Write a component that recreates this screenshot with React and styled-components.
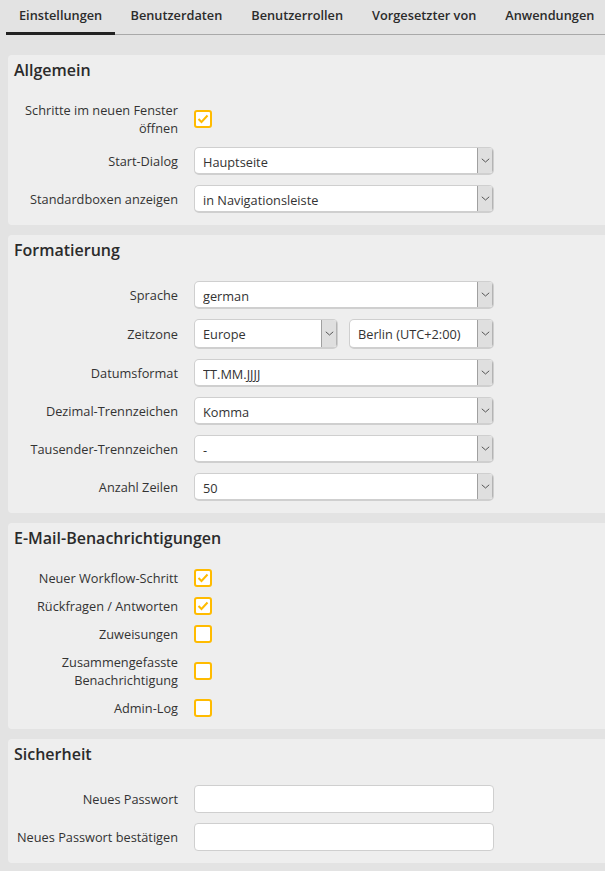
import React from "react";
import styled, { createGlobalStyle } from "styled-components";

const GlobalStyle = createGlobalStyle`
  html, body {
    margin: 0;
    padding: 0;
    background: #e3e3e3;
    overflow: hidden;
  }
  body {
    font-family: "Open Sans", "DejaVu Sans", sans-serif;
    font-size: 12.75px;
    color: #333;
  }
`;

const Page = styled.div`
  width: 605px;
  height: 871px;
  overflow: hidden;
`;

const Tabs = styled.div`
  display: flex;
  height: 35px;
  margin-left: 6px;
  margin-bottom: 20px;
  border-bottom: 1px solid #a9a9a9;
  box-sizing: border-box;
`;

const Tab = styled.div`
  flex: none;
  height: 35px;
  box-sizing: border-box;
  width: ${(p) => (p.$active ? "109px" : "auto")};
  padding: 6px ${(p) => (p.$active ? "13px" : "14.5px")} 0;
  margin-right: ${(p) => (p.$active ? "1px" : "0")};
  font-size: 12.75px;
  line-height: 18px;
  font-weight: 600;
  white-space: nowrap;
  color: #2b2b2b;
  border-bottom: ${(p) => (p.$active ? "3px solid #222" : "none")};
`;

const Card = styled.section`
  margin: 0 0 10px 8px;
  padding: 5px 6px 12px;
  background: #eeeeee;
  border-radius: 4px 0 0 4px;
  display: flex;
  flex-direction: column;
  gap: 10px;
`;

const Title = styled.h2`
  margin: 0;
  height: 31px;
  font-size: 16px;
  line-height: 20px;
  font-weight: 600;
  color: #2b2b2b;
`;

const Row = styled.div`
  display: flex;
  align-items: center;
  gap: 16px;
`;

const Label = styled.label`
  flex: none;
  width: 164px;
  text-align: right;
  font-size: 12.75px;
  line-height: 18px;
  color: #333;
`;

const Controls = styled.div`
  display: grid;
  grid-template-columns: 144px 145px;
  gap: 11px;
`;

const SelectBox = styled.div`
  width: ${(p) => (p.$half ? "auto" : "300px")};
  height: ${(p) => (p.$half ? "30px" : "28px")};
  box-sizing: border-box;
  display: flex;
  background: #fff;
  border: 1px solid #cfcfcf;
  border-bottom-width: 2px;
  border-radius: 5px;
  overflow: hidden;
`;

const NativeSelect = styled.select`
  flex: 1;
  min-width: 0;
  appearance: none;
  border: none;
  outline: none;
  background: transparent;
  padding: ${(p) => (p.$half ? "0" : "2px")} 0 0 8px;
  font: inherit;
  font-size: 12.75px;
  color: #333;
`;

const Arrow = styled.span`
  flex: none;
  width: 16px;
  box-sizing: border-box;
  display: flex;
  align-items: center;
  justify-content: center;
  background: #dfdfdf;
  border-left: 1px solid #a0a0a0;
  border-right: 1px solid #b4b4b4;
  svg {
    display: block;
  }
`;

const TextInput = styled.input`
  width: 300px;
  height: 28px;
  box-sizing: border-box;
  background: #fff;
  border: 1px solid #cfcfcf;
  border-radius: 4px;
  outline: none;
`;

const CheckBox = styled.span`
  flex: none;
  width: 18px;
  height: 18px;
  box-sizing: border-box;
  display: flex;
  align-items: center;
  justify-content: center;
  background: #fff;
  border: 2px solid #ffbb00;
  border-radius: 3px;
`;

const Chevron = () => (
  <svg width="9" height="5" viewBox="0 0 9 5" fill="none">
    <path d="M0.8 0.8 L4.5 4 L8.2 0.8" stroke="#555" strokeWidth="1" />
  </svg>
);

const Tick = () => (
  <svg width="12" height="10" viewBox="0 0 12 10" fill="none">
    <path d="M1.5 5 L4.5 8 L10.5 1.5" stroke="#ffbb00" strokeWidth="2" />
  </svg>
);

const Select = ({ value, half }) => (
  <SelectBox $half={half}>
    <NativeSelect defaultValue={value} $half={half}>
      <option>{value}</option>
    </NativeSelect>
    <Arrow>
      <Chevron />
    </Arrow>
  </SelectBox>
);

const SelectRow = ({ label, value }) => (
  <Row>
    <Label>{label}</Label>
    <Select value={value} />
  </Row>
);

const CheckRow = ({ label, checked }) => (
  <Row>
    <Label>{label}</Label>
    <CheckBox>{checked && <Tick />}</CheckBox>
  </Row>
);

const PasswordRow = ({ label }) => (
  <Row>
    <Label>{label}</Label>
    <TextInput type="password" />
  </Row>
);

const tabs = ["Einstellungen", "Benutzerdaten", "Benutzerrollen", "Vorgesetzter von", "Anwendungen"];

const App = () => (
  <Page>
    <GlobalStyle />
    <Tabs>
      {tabs.map((t, i) => (
        <Tab key={t} $active={i === 0}>
          {t}
        </Tab>
      ))}
    </Tabs>

    <Card>
      <Title>Allgemein</Title>
      <CheckRow label="Schritte im neuen Fenster öffnen" checked />
      <SelectRow label="Start-Dialog" value="Hauptseite" />
      <SelectRow label="Standardboxen anzeigen" value="in Navigationsleiste" />
    </Card>

    <Card>
      <Title>Formatierung</Title>
      <SelectRow label="Sprache" value="german" />
      <Row>
        <Label>Zeitzone</Label>
        <Controls>
          <Select value="Europe" half />
          <Select value="Berlin (UTC+2:00)" half />
        </Controls>
      </Row>
      <SelectRow label="Datumsformat" value="TT.MM.JJJJ" />
      <SelectRow label="Dezimal-Trennzeichen" value="Komma" />
      <SelectRow label="Tausender-Trennzeichen" value="-" />
      <SelectRow label="Anzahl Zeilen" value="50" />
    </Card>

    <Card>
      <Title>E-Mail-Benachrichtigungen</Title>
      <CheckRow label="Neuer Workflow-Schritt" checked />
      <CheckRow label="Rückfragen / Antworten" checked />
      <CheckRow label="Zuweisungen" />
      <CheckRow label="Zusammengefasste Benachrichtigung" />
      <CheckRow label="Admin-Log" />
    </Card>

    <Card>
      <Title>Sicherheit</Title>
      <PasswordRow label="Neues Passwort" />
      <PasswordRow label="Neues Passwort bestätigen" />
    </Card>
  </Page>
);

export default App;
